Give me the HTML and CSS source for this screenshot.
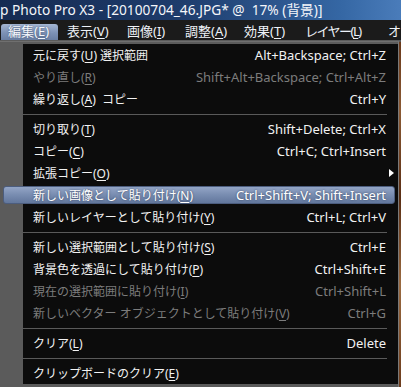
FILE: index.html
```html
<!DOCTYPE html>
<html lang="ja">
<head>
<meta charset="utf-8">
<title>PaintShop Photo Pro X3 - 編集メニュー</title>
<link rel="stylesheet" href="styles.css">
</head>
<body>
<div class="window">
  <div class="titlebar">p Photo Pro X3 - [20100704_46.JPG* @&nbsp; 17% (背景)]</div>
  <div class="menubar">
    <div class="mb-cell"><span class="mb-item open">編集(<u>E</u>)</span></div>
    <div class="mb-cell"><span class="mb-item">表示(<u>V</u>)</span></div>
    <div class="mb-cell"><span class="mb-item">画像(<u>I</u>)</span></div>
    <div class="mb-cell"><span class="mb-item">調整(<u>A</u>)</span></div>
    <div class="mb-cell"><span class="mb-item">効果(<u>T</u>)</span></div>
    <div class="mb-cell"><span class="mb-item narrow">レイヤー(<u>L</u>)</span></div>
    <div class="mb-cell"><span class="mb-item">オ</span></div>
  </div>
  <div class="workspace">
    <div class="menu">
      <div class="item"><div class="row"><span class="label">元に戻す(<u>U</u>) 選択範囲</span><span class="key">Alt+Backspace; Ctrl+Z</span></div></div>
      <div class="item disabled"><div class="row"><span class="label">やり直し(<u>R</u>)</span><span class="key">Shift+Alt+Backspace; Ctrl+Alt+Z</span></div></div>
      <div class="item"><div class="row"><span class="label">繰り返し(<u>A</u>)&nbsp; コピー</span><span class="key">Ctrl+Y</span></div></div>
      <div class="sep"></div>
      <div class="item"><div class="row"><span class="label">切り取り(<u>T</u>)</span><span class="key">Shift+Delete; Ctrl+X</span></div></div>
      <div class="item"><div class="row"><span class="label">コピー(<u>C</u>)</span><span class="key">Ctrl+C; Ctrl+Insert</span></div></div>
      <div class="item"><div class="row"><span class="label">拡張コピー(<u>O</u>)</span><span class="arrow"></span></div></div>
      <div class="item active"><div class="row"><span class="label">新しい画像として貼り付け(<u>N</u>)</span><span class="key">Ctrl+Shift+V; Shift+Insert</span></div></div>
      <div class="item"><div class="row"><span class="label">新しいレイヤーとして貼り付け(<u>Y</u>)</span><span class="key">Ctrl+L; Ctrl+V</span></div></div>
      <div class="sep"></div>
      <div class="item"><div class="row"><span class="label">新しい選択範囲として貼り付け(<u>S</u>)</span><span class="key">Ctrl+E</span></div></div>
      <div class="item"><div class="row"><span class="label">背景色を透過にして貼り付け(<u>P</u>)</span><span class="key">Ctrl+Shift+E</span></div></div>
      <div class="item disabled"><div class="row"><span class="label">現在の選択範囲に貼り付け(<u>I</u>)</span><span class="key">Ctrl+Shift+L</span></div></div>
      <div class="item disabled"><div class="row"><span class="label">新しいベクター オブジェクトとして貼り付け(<u>V</u>)</span><span class="key">Ctrl+G</span></div></div>
      <div class="sep"></div>
      <div class="item"><div class="row"><span class="label">クリア(<u>L</u>)</span><span class="key">Delete</span></div></div>
      <div class="sep"></div>
      <div class="item"><div class="row"><span class="label">クリップボードのクリア(<u>E</u>)</span></div></div>
    </div>
    <div class="canvas"></div>
  </div>
</div>
</body>
</html>
```

FILE: styles.css
```css
html, body {
  margin: 0;
  padding: 0;
}
body {
  width: 401px;
  height: 387px;
  overflow: hidden;
  background: #5b5b5b;
  font-family: "Noto Sans", "Noto Sans CJK JP", sans-serif;
  color: #f2f2f2;
}
u {
  text-decoration: underline;
  text-underline-offset: 2px;
}
.window {
  display: flex;
  flex-direction: column;
}
.titlebar {
  height: 20px;
  line-height: 20px;
  font-size: 13.7px;
  white-space: nowrap;
  overflow: hidden;
  color: #f4f6fa;
  background: linear-gradient(90deg, #162b52 0%, #1e3c6c 45%, #3567a4 85%, #4a7cba 100%);
}
.menubar {
  height: 20px;
  display: grid;
  grid-template-columns: 59px 60px 58px 59px 61px 83px 20px;
  align-items: end;
  background: #1b1b1b;
  font-size: 13px;
  white-space: nowrap;
  overflow: hidden;
  padding-left: 1px;
}
.mb-cell {
  display: flex;
  overflow: visible;
}
.mb-item {
  height: 16px;
  line-height: 15px;
  padding: 0 5px 0 7px;
  color: #eef2f8;
  border-radius: 3px 3px 0 0;
}
.mb-item.narrow {
  letter-spacing: -1.5px;
}
.mb-item.open {
  padding-right: 9px;
  background: linear-gradient(#a4b6d3, #7d92b6 55%, #6a7fa3);
  color: #f4f7fc;
  text-shadow: 0 0 2px #3d4e6c;
}
.workspace {
  display: flex;
  margin-top: 1px;
}
.menu {
  width: 398px;
  border-top: 1px solid #6f6f6f;
  border-right: 1px solid #7a7a7a;
  border-bottom: 1px solid #7a7a7a;
  padding-top: 2px;
  background: #5b5b5b;
  font-size: 12px;
}
.canvas {
  flex: 1;
  margin-top: 1px;
  height: 346px;
  background: linear-gradient(180deg, #6a3a1c, #8b5a34 20%, #5a2e14 45%, #9a6a40 70%, #6b3b1c);
}
.item {
  height: 22px;
  display: flex;
  background: linear-gradient(90deg, #5b5b5b 23px, #0c0c0c 23px);
}
.row {
  flex: 1;
  display: flex;
  align-items: center;
  justify-content: space-between;
  margin: 2px 3px 2px 3px;
  padding: 0 8px 0 29px;
  border: 1px solid transparent;
  border-radius: 3px;
  white-space: nowrap;
}
.item.disabled {
  color: #7c7c7c;
}
.item.active .row {
  background: linear-gradient(#93a5c6, #788cb0 50%, #62779c);
  border-color: #4c5d7e;
  color: #ffffff;
  text-shadow: 0 0 2px #33425e;
}
.key {
  margin-left: 12px;
  font-size: 13px;
}
.arrow {
  width: 0;
  height: 0;
  border-top: 4px solid transparent;
  border-bottom: 4px solid transparent;
  border-left: 5px solid #ffffff;
  margin-right: -8px;
}
.sep {
  height: 8px;
  display: flex;
  align-items: center;
  background: linear-gradient(90deg, #5b5b5b 23px, #0c0c0c 23px);
}
.sep::after {
  content: "";
  margin-left: 23px;
  width: 364px;
  height: 1px;
  background: #5a5a5a;
}
```
